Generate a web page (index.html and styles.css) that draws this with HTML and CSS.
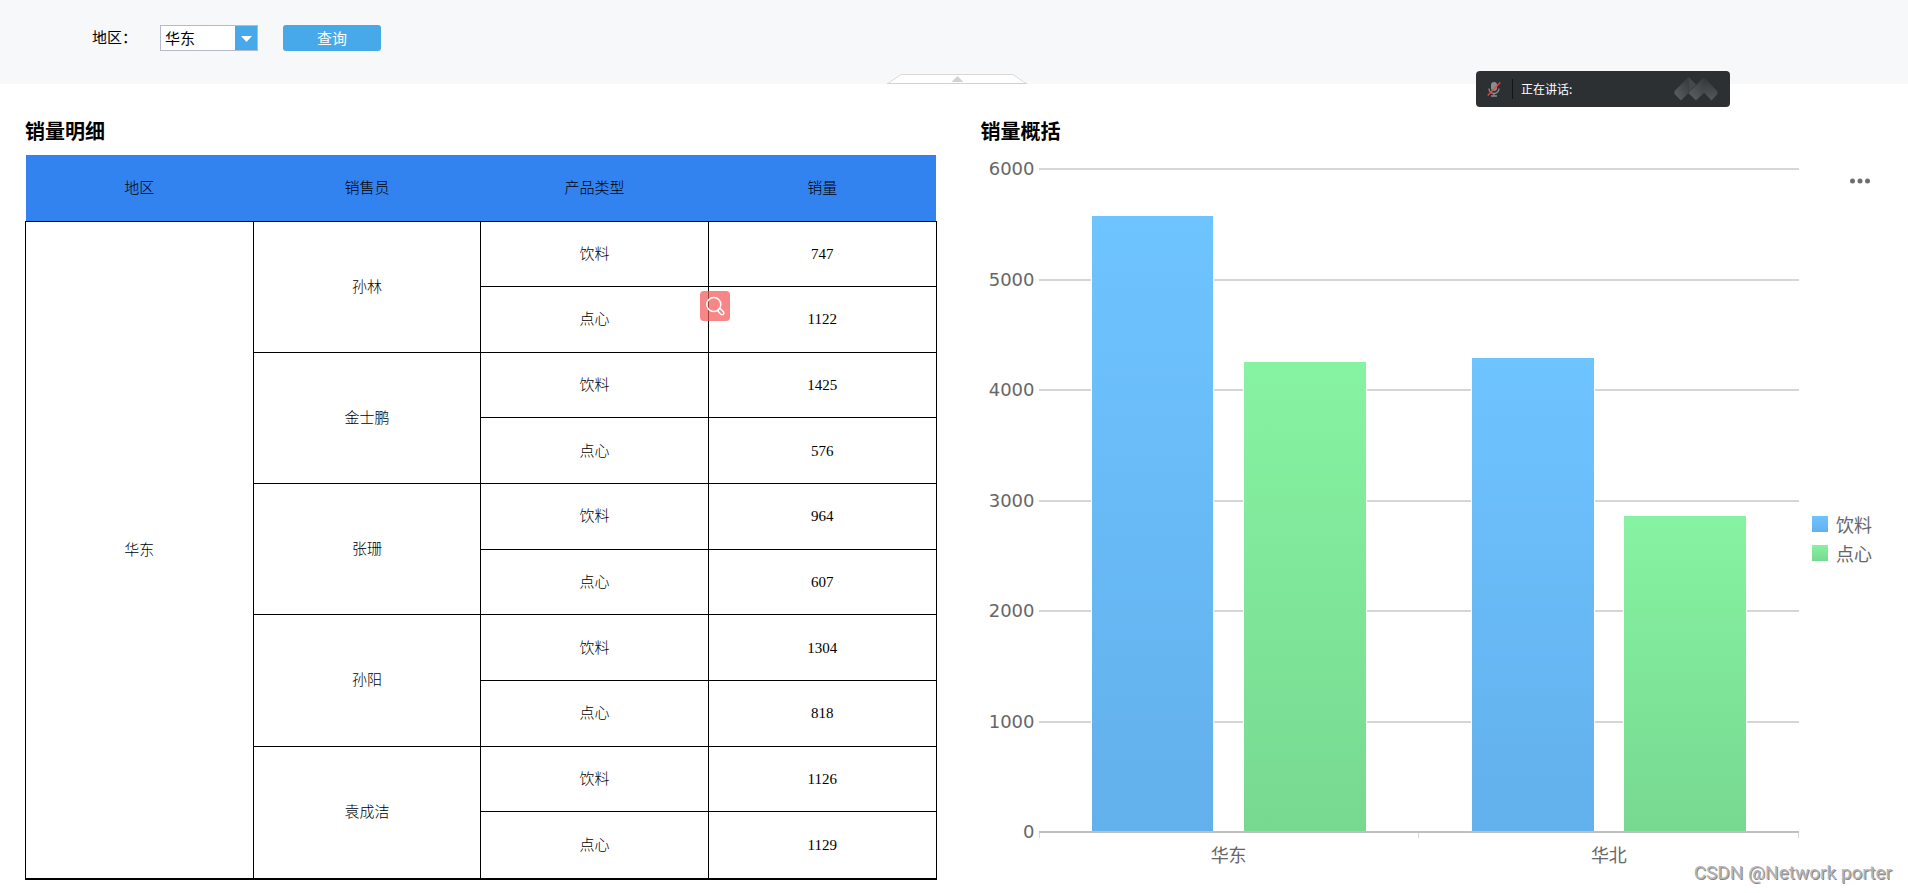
FILE: index.html
```html
<!DOCTYPE html>
<html lang="zh-CN">
<head>
<meta charset="utf-8">
<title>销量明细</title>
<link rel="stylesheet" href="styles.css">
</head>
<body>
<form class="toolbar">
  <label class="toolbar-label" for="region">地区：</label>
  <div class="combo">
    <select class="combo-select" id="region"><option>华东</option><option>华北</option></select>
    <svg class="combo-arrow" viewBox="0 0 22 24" aria-hidden="true"><path d="M6 10h11l-5.500 6z" fill="#fff"/></svg>
  </div>
  <button class="query" type="button">查询</button>
  <button class="collapse" type="button" aria-label="收起">
    <svg viewBox="0 0 140 10" width="140" height="10"><path d="M1 9.500 14 .5H126L139 9.500z" fill="#fff" stroke="#d9d9d9"/><path d="M0 9.500H140" stroke="#d2d2d2"/><path d="M64.500 8 70.500 2l6 6z" fill="#d2d2d2"/></svg>
  </button>
</form>

<main class="report">
  <section class="panel">
    <h2 class="panel-title">销量明细</h2>
    <table class="sales">
      <thead>
        <tr><th>地区</th><th>销售员</th><th>产品类型</th><th>销量</th></tr>
      </thead>
      <tbody>
        <tr><td rowspan="10">华东</td><td rowspan="2">孙林</td><td>饮料</td><td>747</td></tr>
        <tr><td>点心</td><td>1122</td></tr>
        <tr><td rowspan="2">金士鹏</td><td>饮料</td><td>1425</td></tr>
        <tr><td>点心</td><td>576</td></tr>
        <tr><td rowspan="2">张珊</td><td>饮料</td><td>964</td></tr>
        <tr><td>点心</td><td>607</td></tr>
        <tr><td rowspan="2">孙阳</td><td>饮料</td><td>1304</td></tr>
        <tr><td>点心</td><td>818</td></tr>
        <tr><td rowspan="2">袁成洁</td><td>饮料</td><td>1126</td></tr>
        <tr><td>点心</td><td>1129</td></tr>
      </tbody>
    </table>
  </section>

  <section class="panel">
    <h2 class="panel-title">销量概括</h2>
    <div class="chart">
      <div class="y-axis"><span>6000</span><span>5000</span><span>4000</span><span>3000</span><span>2000</span><span>1000</span><span>0</span></div>
      <div class="plot">
        <div class="grid-lines"><i></i><i></i><i></i><i></i><i></i><i></i><i class="base"></i></div>
        <div class="bars">
          <div class="group"><div class="bar drink" style="height:92.8%"></div><div class="bar snack" style="height:70.8%"></div></div>
          <div class="group"><div class="bar drink" style="height:71.3%"></div><div class="bar snack" style="height:47.5%"></div></div>
        </div>
        <div class="ticks"><i></i><i></i><i></i></div>
      </div>
      <div class="side">
        <button class="more" type="button" aria-label="更多"><svg viewBox="0 0 20 6" width="20" height="6" fill="#6e6e6e"><circle cx="2.500" cy="3" r="2.500"/><circle cx="10" cy="3" r="2.500"/><circle cx="17.500" cy="3" r="2.500"/></svg></button>
        <ul class="legend">
          <li><span class="swatch drink"></span>饮料</li>
          <li><span class="swatch snack"></span>点心</li>
        </ul>
      </div>
      <div class="x-axis"><span>华东</span><span>华北</span></div>
    </div>
  </section>
</main>

<button class="lens" type="button" aria-label="搜索">
  <svg viewBox="0 0 30 30" width="30" height="30" fill="none" stroke="#fff" stroke-width="1.500"><circle cx="13.800" cy="13.500" r="7"/><rect x="-3.200" y="-1.800" width="6.800" height="3.600" rx="1.700" transform="translate(20.800 20.600) rotate(45)"/></svg>
</button>

<div class="speaking">
  <svg class="mic" viewBox="0 0 14 16" width="14" height="16" fill="none"><rect x="4" y="1" width="6" height="9" rx="3" fill="#8b8e90"/><path d="M2 7.500a5 5 0 0 0 10 0M7 12.500V15M4 15h6" stroke="#8b8e90" stroke-width="1.300"/><path d="M.7 14.500 13.300 1.500" stroke="#f0453f" stroke-width="1.300"/></svg>
  <span class="speaking-text">正在讲话:</span>
  <svg class="brand" viewBox="0 0 44 24" width="44" height="24">
    <defs>
      <linearGradient id="fade" x1="0" y1="1" x2="1" y2="0"><stop offset="0" stop-color="#5f6264"/><stop offset="1" stop-color="#35393b"/></linearGradient>
      <linearGradient id="fall" x1="0" y1="0" x2="0" y2="1"><stop offset="0" stop-color="#33373a"/><stop offset="1" stop-color="#56595b"/></linearGradient>
    </defs>
    <path d="M14.500 0V16L7 23.500 1 17.500Q-.5 15.500 1 13.500z" fill="url(#fade)"/>
    <path d="M14.500 0 22 7.500 14.500 16z" fill="#46494b"/>
    <path d="M14.500 16 28 2q2-1.500 4 0V14L22 23.500z" fill="url(#fade)"/>
    <path d="M30 1.500q1-.5 2 .5L43 14q1.200 1.800 0 3.500L37.500 23.500 30 15.500z" fill="url(#fall)"/>
  </svg>
</div>

<div class="watermark">CSDN @Network porter</div>
</body>
</html>
```
FILE: styles.css
```css
* { box-sizing: border-box; }

body {
  position: relative;
  display: flex;
  flex-direction: column;
  min-height: 100vh;
  margin: 0;
  background: #fff;
  color: #000;
  font-family: "Noto Sans CJK SC", sans-serif;
}

button, select { font-family: inherit; }

/* query bar */
.toolbar {
  position: relative;
  display: flex;
  align-items: flex-start;
  height: 84px;
  padding: 25px 92px;
  background: #f7f8fa;
}

.toolbar-label {
  width: 68px;
  font-size: 15px;
  line-height: 24px;
}

.combo {
  position: relative;
  width: 98px;
  height: 26px;
  margin-right: 25px;
}

.combo-select {
  width: 100%;
  height: 100%;
  padding: 0 4px;
  border: 1px solid #b4b9ce;
  border-radius: 0;
  background: #fff;
  color: #000;
  font-size: 15px;
  line-height: 24px;
  appearance: none;
}

.combo-arrow {
  position: absolute;
  top: 1px;
  right: 1px;
  width: 22px;
  height: 24px;
  background: #47a8ea;
  pointer-events: none;
}

.query {
  width: 98px;
  height: 26px;
  padding: 0;
  border: 0;
  border-radius: 3px;
  background: #47a8ea;
  color: #fff;
  font-size: 15px;
  line-height: 26px;
}

.collapse {
  position: absolute;
  bottom: 0;
  left: calc(50% + 3px);
  width: 140px;
  height: 10px;
  margin-left: -70px;
  padding: 0;
  border: 0;
  background: none;
}

.collapse svg { display: block; }

/* report body */
.report {
  flex: 1;
  display: grid;
  grid-template-columns: 101fr 100fr;
  gap: 44px;
  padding: 32px 25px 13px;
}

.panel {
  display: flex;
  flex-direction: column;
}

.panel-title {
  margin: 0 0 9px;
  font-size: 20px;
  font-weight: 700;
  line-height: 30px;
}

.sales {
  flex: 1;
  width: 100%;
  height: calc(100vh - 168px);
  border-collapse: collapse;
  border-bottom: 2px solid #000;
  table-layout: fixed;
  font-family: "Liberation Serif", "Noto Sans CJK SC", serif;
  font-size: 15px;
  line-height: 20px;
  text-align: center;
}

.sales th {
  height: 66px;
  padding: 0;
  background: #3283f0;
  font-weight: 300;
}

.sales td {
  padding: 0;
  border: 1px solid #000;
  font-weight: 300;
}

/* chart */
.chart {
  flex: 1;
  display: grid;
  grid-template-columns: 58px 1fr 84px;
  grid-template-rows: 1fr 20px;
  margin-top: 1px;
  padding-bottom: 15px;
  color: #666;
  font-size: 18px;
}

.y-axis {
  display: flex;
  flex-direction: column;
  justify-content: space-between;
  padding-right: 4px;
  font-family: "DejaVu Sans", sans-serif;
  line-height: 26px;
  text-align: right;
}

.plot {
  display: grid;
  margin: 12px 0;
}

.grid-lines, .bars, .ticks { grid-area: 1 / 1; }

.grid-lines {
  display: flex;
  flex-direction: column;
  justify-content: space-between;
}

.grid-lines i {
  height: 2px;
  background: #d6d6d6;
}

.grid-lines .base { background: #bfbfbf; }

.ticks {
  display: flex;
  align-self: end;
  justify-content: space-between;
  height: 5px;
  margin-bottom: -5px;
}

.ticks i {
  width: 1px;
  background: #d6d6d6;
}

.bars {
  display: grid;
  grid-template-columns: 1fr 1fr;
  padding-bottom: 2px;
}

.group {
  display: grid;
  grid-template-columns: 32% 32%;
  gap: 8%;
  align-items: end;
  justify-content: center;
}

.bar { box-shadow: 0 -1px 0 1px #fff; }

.drink { background: linear-gradient(#6ec4ff, #62b0ec); }

.snack { background: linear-gradient(#86f3a2, #77d990); }

.side {
  grid-row: 1 / 3;
  grid-column: 3;
  display: flex;
  flex-direction: column;
  padding: 22px 0 0 13px;
}

.more {
  align-self: flex-end;
  width: 20px;
  height: 6px;
  margin-right: 13px;
  padding: 0;
  border: 0;
  background: none;
}

.more svg { display: block; }

.legend {
  margin: auto 0;
  padding: 28px 0 0;
  list-style: none;
  line-height: 29px;
}

.legend li {
  display: flex;
  align-items: center;
  gap: 8px;
}

.swatch {
  width: 16px;
  height: 16px;
}

.x-axis {
  grid-row: 2;
  grid-column: 2;
  display: grid;
  grid-template-columns: 1fr 1fr;
  line-height: 18px;
  text-align: center;
}

/* floating items */
.lens {
  position: absolute;
  top: 291px;
  left: 700px;
  width: 30px;
  height: 30px;
  padding: 0;
  border: 0;
  border-radius: 4px;
  background: rgba(243, 82, 82, 0.7);
}

.lens svg { display: block; }

.speaking {
  position: absolute;
  top: 71px;
  right: 178px;
  display: flex;
  align-items: center;
  width: 254px;
  height: 36px;
  padding: 0 12px 0 11px;
  border-radius: 4px;
  background: #2c3033;
  color: #fff;
  font-size: 12px;
}

.speaking-text {
  flex: 1;
  margin-left: 11px;
  padding-left: 8px;
  border-left: 1px solid #121415;
  line-height: 20px;
}

.watermark {
  position: absolute;
  right: 16px;
  bottom: 8px;
  color: #b4b4b4;
  font-family: Roboto, sans-serif;
  font-size: 19px;
  line-height: 24px;
  text-shadow: 1px 1px 0 #888;
}
```
